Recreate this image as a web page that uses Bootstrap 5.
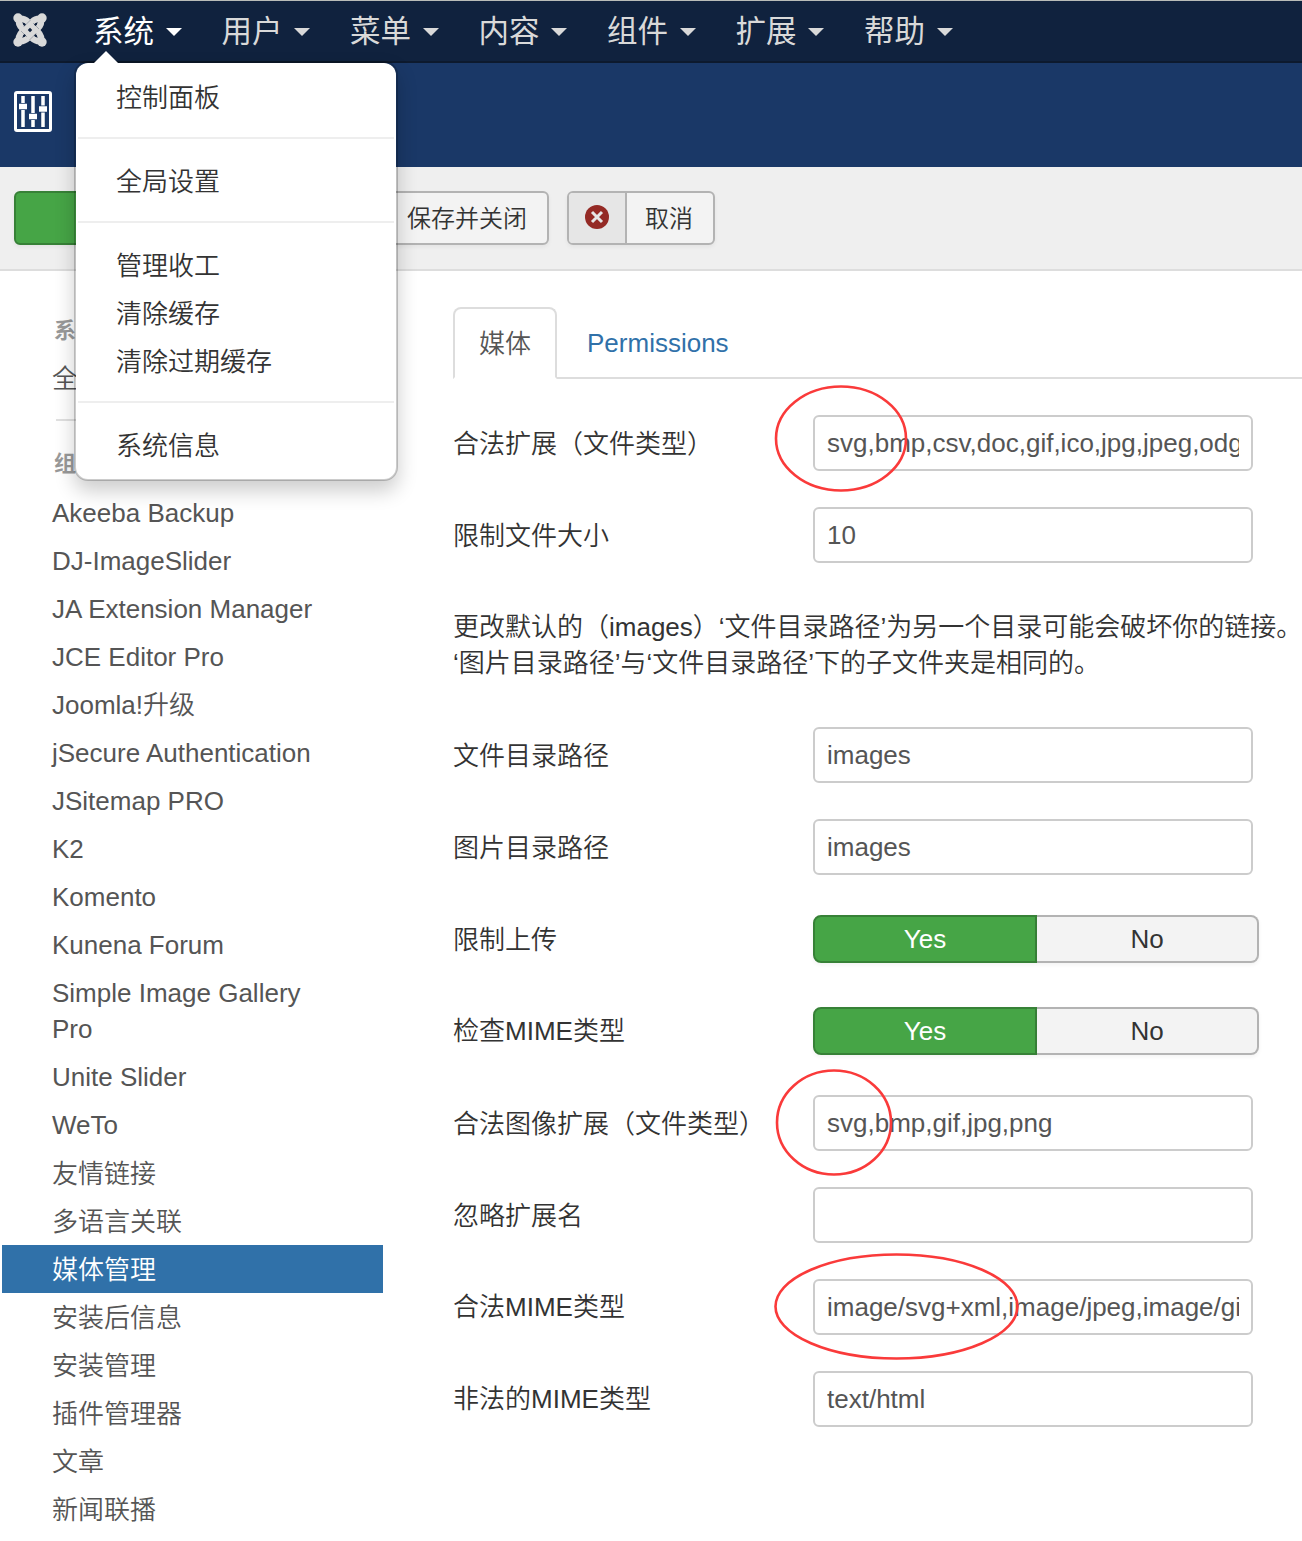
<!DOCTYPE html>
<html lang="zh-CN">
<head>
<meta charset="utf-8">
<title>媒体管理</title>
<link href="https://cdn.jsdelivr.net/npm/bootstrap@5.3.0/dist/css/bootstrap.min.css" rel="stylesheet">
<style>
body{font:26px/36px "Liberation Sans","Noto Sans CJK SC",sans-serif;font-weight:350;color:#333;background:#fff;overflow:hidden;width:1302px;height:1541px}
.topbar{height:63px;background:#10223e;border-top:1px solid #b9bcb8;border-bottom:2px solid #0d1a2e;padding:0 0 0 13px}
.brand-mark{width:34px;height:34px;margin-right:26px;margin-top:-2px}
.topbar .nav-link{font-size:30.5px;line-height:40px;color:#d9d9d9;padding:10px 20px;display:flex;align-items:center;font-weight:400}
.topbar .nav-link.active{color:#fff}
.tri{border:8px solid transparent;border-top-color:currentColor;border-bottom:0;margin:2px 0 0 11.5px}
.sysmenu{position:absolute;left:74px;top:61px;width:324px;padding:10px 2px;background:#fff;background-clip:padding-box;border:2px solid rgba(0,0,0,.2);border-radius:14px;box-shadow:0 10px 20px rgba(0,0,0,.2);z-index:10;font-size:26px}
.sysmenu::before{content:"";position:absolute;left:18px;top:-12px;border:12px solid transparent;border-top:0;border-bottom-color:#fff}
.sysmenu .dropdown-item{line-height:36px;padding:7px 38px 5px;color:#333;font-weight:350}
.sysmenu .dropdown-divider{border-top:2px solid #eee;margin:16px 0 18px;opacity:1}
.headband{height:104px;background:#1a3867;padding:28px 13px}
.toolband{height:104px;background:#efefef;border-bottom:2px solid #ddd;padding:24px 14px}
.tool{height:54px;border:2px solid #b3b3b3;border-radius:6px;background:#f3f3f3;font-size:24px;line-height:52px;color:#333;box-shadow:0 2px 4px rgba(0,0,0,.05);display:flex;overflow:hidden}
.tool-save{width:300px;background:#46a546;border-color:#378137;margin-right:18px}
.tool-close{width:217px;margin-right:18px;justify-content:flex-end;padding-right:20px}
.tool-cancel{width:148px}
.tool-x{width:58px;height:50px;background:#e6e6e6;border-right:2px solid #b3b3b3;display:flex;align-items:center;justify-content:center;margin-right:18px;padding-bottom:3px}
.sidebar{width:383px;padding:42px 0 0 2px}
.sidebar .nav-header{font-size:22px;font-weight:700;color:#999;padding:0 52px 6px;line-height:36px}
.sidebar .nav-header.later{padding-bottom:7px}
.sidebar .nav-link{color:#555;padding:6px 50px;line-height:36px}
.sidebar .nav-link.zh{padding:7px 50px 5px}
.sidebar .nav-link.active{background:#3071a9;color:#fff}
.side-rule{height:2px;background:#e0e0e0;margin:16px 50px 25px 54px}
.content{width:849px;margin-left:70px;padding-top:36px}
.content .nav-tabs{border-bottom:2px solid #ddd;height:72px;margin-bottom:36px}
.content .nav-tabs .nav-link{height:72px;border:2px solid transparent;border-radius:8px 8px 0 0;padding:16px 24px;line-height:36px;color:#3071a9;margin:0 4px 0 0}
.content .nav-tabs .nav-link.active{border-color:#ddd #ddd #fff;color:#555;padding-top:17px}
.field{display:flex;align-items:flex-start;height:56px;margin-bottom:36px}
.field label{width:360px;line-height:36px;padding-top:10px;white-space:nowrap}
.field label.zh{padding-top:11px}
.field .form-control{width:440px;height:56px;border:2px solid #ccc;border-radius:6px;padding:8px 12px;font-size:26px;line-height:36px;color:#555;font-family:inherit}
.field.pick{height:48px;margin:40px 0 44px}
.field.pick.last-pick{margin:0 0 40px}
.field.pick label{padding-top:6px}
.field.pick label.zh{padding-top:7px}
.pick .yes,.pick .no{width:224px;height:48px;border:2px solid #378137;background:#46a546;color:#fff;line-height:44px;text-align:center;border-radius:8px 0 0 8px;box-shadow:0 2px 4px rgba(0,0,0,.05)}
.pick .no{width:222px;border-color:#b3b3b3;border-left:0;background:#f3f3f3;color:#333;border-radius:0 8px 8px 0}
.note{white-space:nowrap;margin:46px 0}
.marks{position:absolute;left:0;top:0;z-index:5;pointer-events:none}
</style>
</head>
<body class="position-relative">
<nav class="topbar d-flex align-items-center">
  <svg class="brand-mark flex-shrink-0" viewBox="0 0 34 34" fill="none" stroke="#d9d9d9"><g fill="#d9d9d9" stroke="none"><circle cx="5" cy="5" r="4.700"/><circle cx="29" cy="5" r="4.700"/><circle cx="5" cy="29" r="4.700"/><circle cx="29" cy="29" r="4.700"/></g><g stroke-width="6.500"><path d="M5 6Q11 5 15 9L25 19Q29 23 28 29"/><path d="M28 5Q29 11 25 15L15 25Q11 29 5 28"/><path d="M6 5Q5 11 9 15L19 25Q23 29 29 28"/><path d="M29 6Q23 5 19 9L9 19Q5 23 6 29"/></g><path d="M10.500 14l7-7M20 10l6 6M23.500 20l-7 7M14 24l-6-6" stroke="#10223e" stroke-width=".8" opacity=".35"/><path d="M17 14.800l2.200 2.200-2.200 2.200-2.200-2.200zM11.500 10l1.500 1.500-1.500 1.500-1.500-1.500zM22.500 10l1.500 1.500-1.500 1.500-1.500-1.500zM11.500 21l1.500 1.500-1.500 1.500-1.500-1.500zM22.500 21l1.500 1.500-1.500 1.500-1.500-1.500z" fill="#10223e" stroke="none"/></svg>
  <div class="nav flex-nowrap">
    <a class="nav-link active">系统<i class="tri"></i></a><a class="nav-link">用户<i class="tri"></i></a><a class="nav-link">菜单<i class="tri"></i></a><a class="nav-link">内容<i class="tri"></i></a><a class="nav-link">组件<i class="tri"></i></a><a class="nav-link">扩展<i class="tri"></i></a><a class="nav-link">帮助<i class="tri"></i></a>
  </div>
</nav>
<div class="sysmenu">
  <a class="dropdown-item">控制面板</a><hr class="dropdown-divider">
  <a class="dropdown-item">全局设置</a><hr class="dropdown-divider">
  <a class="dropdown-item">管理收工</a><a class="dropdown-item">清除缓存</a><a class="dropdown-item">清除过期缓存</a><hr class="dropdown-divider">
  <a class="dropdown-item">系统信息</a>
</div>
<header class="headband">
  <svg class="d-block" width="40" height="42" viewBox="0 0 40 42"><rect x="2.500" y="1.500" width="35" height="38" rx="1.500" fill="none" stroke="#fff" stroke-width="3"/><path d="M10 5v31M20 5v31M30 5v31" stroke="#fff" stroke-width="3.500"/><path d="M6 15.500h8M16 25.500h8M26 18h8" stroke="#1a3867" stroke-width="7"/><path d="M6 15.500h8M16 25.500h8M26 18h8" stroke="#fff" stroke-width="5.500"/></svg>
</header>
<div class="toolband d-flex">
  <div class="tool tool-save"></div>
  <div class="tool tool-close">保存并关闭</div>
  <div class="tool tool-cancel"><span class="tool-x"><svg width="24" height="24" viewBox="0 0 24 24"><circle cx="12" cy="12" r="12" fill="#942a25"/><path d="M7 7l10 10M17 7L7 17" stroke="#e6e6e6" stroke-width="3"/></svg></span>取消</div>
</div>
<main class="d-flex">
  <aside class="sidebar flex-shrink-0">
    <div class="nav-header">系</div>
    <nav class="nav flex-column flex-nowrap">
      <a class="nav-link">全</a>
      <div class="side-rule"></div>
      <div class="nav-header later">组</div>
      <a class="nav-link">Akeeba Backup</a><a class="nav-link">DJ-ImageSlider</a><a class="nav-link">JA Extension Manager</a><a class="nav-link">JCE Editor Pro</a><a class="nav-link">Joomla!升级</a><a class="nav-link">jSecure Authentication</a><a class="nav-link">JSitemap PRO</a><a class="nav-link">K2</a><a class="nav-link">Komento</a><a class="nav-link">Kunena Forum</a><a class="nav-link">Simple Image Gallery Pro</a><a class="nav-link">Unite Slider</a><a class="nav-link">WeTo</a><a class="nav-link zh">友情链接</a><a class="nav-link zh">多语言关联</a><a class="nav-link zh active">媒体管理</a><a class="nav-link zh">安装后信息</a><a class="nav-link zh">安装管理</a><a class="nav-link zh">插件管理器</a><a class="nav-link zh">文章</a><a class="nav-link zh">新闻联播</a>
    </nav>
  </aside>
  <section class="content flex-shrink-0">
    <nav class="nav nav-tabs"><a class="nav-link active">媒体</a><a class="nav-link">Permissions</a></nav>
    <div class="field"><label class="zh">合法扩展（文件类型）</label><input class="form-control" value="svg,bmp,csv,doc,gif,ico,jpg,jpeg,odg,odp"></div>
    <div class="field"><label class="zh">限制文件大小</label><input class="form-control" value="10"></div>
    <p class="note">更改默认的（images）‘文件目录路径’为另一个目录可能会破坏你的链接。<br>‘图片目录路径’与‘文件目录路径’下的子文件夹是相同的。</p>
    <div class="field"><label class="zh">文件目录路径</label><input class="form-control" value="images"></div>
    <div class="field"><label class="zh">图片目录路径</label><input class="form-control" value="images"></div>
    <div class="field pick"><label class="zh">限制上传</label><span class="yes">Yes</span><span class="no">No</span></div>
    <div class="field pick last-pick"><label>检查MIME类型</label><span class="yes">Yes</span><span class="no">No</span></div>
    <div class="field"><label class="zh">合法图像扩展（文件类型）</label><input class="form-control" value="svg,bmp,gif,jpg,png"></div>
    <div class="field"><label class="zh">忽略扩展名</label><input class="form-control" value=""></div>
    <div class="field"><label>合法MIME类型</label><input class="form-control" value="image/svg+xml,image/jpeg,image/gif,image/png"></div>
    <div class="field"><label>非法的MIME类型</label><input class="form-control" value="text/html"></div>
  </section>
</main>
<svg class="marks" width="1302" height="1541" fill="none" stroke="#fa3a3a" stroke-width="2.600"><ellipse cx="841" cy="438.500" rx="65" ry="52"/><ellipse cx="834" cy="1122.500" rx="57" ry="52"/><ellipse cx="896.500" cy="1306.500" rx="121" ry="52"/></svg>
<script src="https://cdn.jsdelivr.net/npm/bootstrap@5.3.0/dist/js/bootstrap.bundle.min.js"></script>
</body>
</html>
